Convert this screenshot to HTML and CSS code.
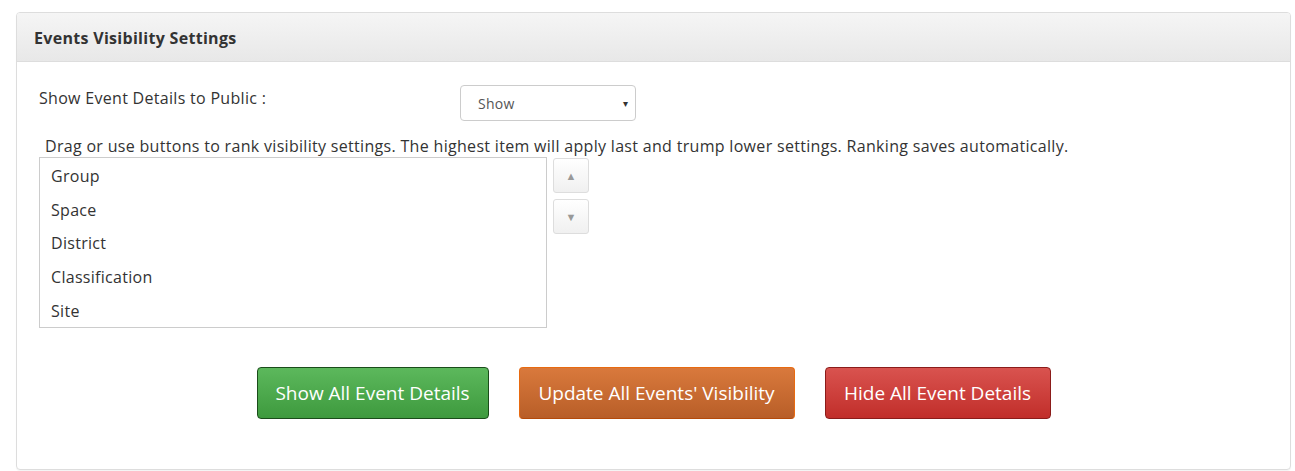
FILE: index.html
```html
<!DOCTYPE html>
<html>
<head>
    <meta charset="UTF-8">
    <title>Events Visibility Settings</title>
    <link rel="stylesheet" href="styles.css">
</head>
<body>
    <div class="panel">
        <div class="panel-heading">Events Visibility Settings</div>
        <div class="panel-body">
            <div class="form-row">
                <label class="form-label">Show Event Details to Public :</label>
                <div class="select-box">
                    <span>Show</span>
                    <span class="caret">&#9662;</span>
                </div>
            </div>

            <div class="hint">Drag or use buttons to rank visibility settings. The highest item will apply last and trump lower settings. Ranking saves automatically.</div>

            <div class="rank-row">
                <ul class="rank-list">
                    <li>Group</li>
                    <li>Space</li>
                    <li>District</li>
                    <li>Classification</li>
                    <li>Site</li>
                </ul>
                <div class="rank-buttons">
                    <button class="move-btn">&#9650;</button>
                    <button class="move-btn">&#9660;</button>
                </div>
            </div>

            <div class="actions">
                <button class="btn btn-green">Show All Event Details</button>
                <button class="btn btn-orange">Update All Events' Visibility</button>
                <button class="btn btn-red">Hide All Event Details</button>
            </div>
        </div>
    </div>
</body>
</html>
```
FILE: styles.css
```css
body {
    font-family: "Open Sans", "Noto Sans", sans-serif;
    margin: 0;
    padding: 12px 4px 2px 16px;
    background: white;
    color: #333;
}
.panel {
    border: 1px solid #ddd;
    border-radius: 4px;
    box-shadow: 0 1px 1px rgba(0,0,0,0.05);
    height: 458px;
    box-sizing: border-box;
}
.panel-heading {
    height: 49px;
    box-sizing: border-box;
    padding: 14px 17px 0;
    background: linear-gradient(#f5f5f5, #e8e8e8);
    border-bottom: 1px solid #ddd;
    border-radius: 3px 3px 0 0;
    font-size: 16px;
    font-weight: bold;
    letter-spacing: 0.3px;
    line-height: 22px;
    color: #333;
}
.panel-body {
    padding: 22px 22px 0;
}
.form-row {
    display: flex;
    align-items: flex-start;
}
.form-label {
    width: 421px;
    font-size: 16px;
    letter-spacing: 0.3px;
    line-height: 22px;
    padding-top: 3px;
}
.select-box {
    width: 176px;
    height: 36px;
    margin-top: 1px;
    box-sizing: border-box;
    border: 1px solid #ccc;
    border-radius: 4px;
    display: flex;
    align-items: center;
    justify-content: space-between;
    padding: 0 7px 0 17px;
    font-size: 14px;
    letter-spacing: 0.3px;
    color: #555;
}
.caret {
    font-size: 10px;
    color: #333;
}
.hint {
    margin: 15px 0 0 6px;
    font-size: 16px;
    letter-spacing: 0.31px;
    line-height: 21px;
}
.rank-row {
    display: flex;
    gap: 6px;
}
.rank-list {
    list-style: none;
    margin: 0;
    padding: 2px 0 0 11px;
    width: 508px;
    height: 171px;
    box-sizing: border-box;
    border: 1px solid #ccc;
}
.rank-list li {
    height: 33.7px;
    line-height: 33px;
    font-size: 16px;
    letter-spacing: 0.3px;
}
.rank-buttons {
    display: flex;
    flex-direction: column;
    gap: 6px;
    padding-top: 1px;
}
.move-btn {
    width: 36px;
    height: 35px;
    border: 1px solid #ddd;
    border-radius: 3px;
    background: linear-gradient(#fff, #f0f0f0);
    color: #999;
    font-size: 11px;
    padding: 0;
}
.actions {
    display: flex;
    justify-content: center;
    gap: 30px;
    margin-top: 39px;
}
.btn {
    height: 52px;
    padding: 0 10px;
    border-radius: 4px;
    font-family: inherit;
    font-size: 19px;
    color: white;
    cursor: pointer;
}
.btn-green {
    width: 232px;
    background: linear-gradient(#5cb85c, #3e9a3e);
    border: 1px solid #1a4d1a;
}
.btn-orange {
    width: 276px;
    background: linear-gradient(#d9793c, #b85e28);
    border: 1px solid #e86a10;
    border-bottom-color: #b44a0a;
}
.btn-red {
    width: 226px;
    background: linear-gradient(#d9534f, #c12e2a);
    border: 1px solid #8b1c1a;
}
```
